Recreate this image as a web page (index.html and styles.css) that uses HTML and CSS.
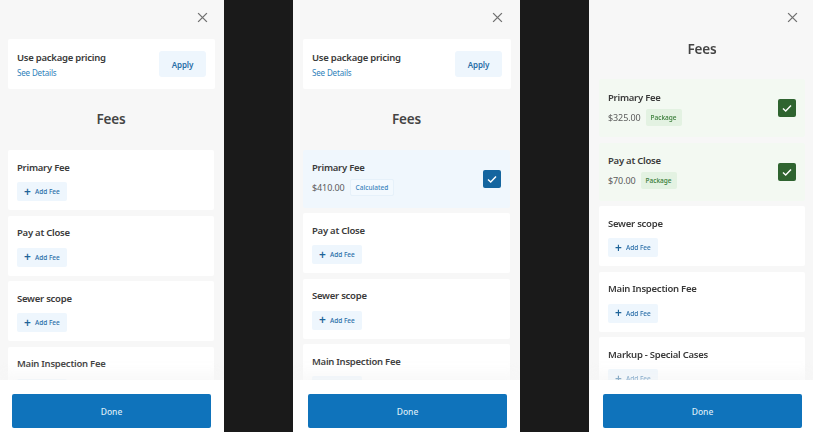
FILE: index.html
```html
<!DOCTYPE html>
<html lang="en">
<head>
    <meta charset="UTF-8">
    <title>Fees</title>
    <link rel="stylesheet" href="styles.css">
</head>
<body>
    <div class="screens">
        <section class="panel panel-one">
            <div class="close-row"><svg class="close" viewBox="0 0 10 10"><path d="M1 1l8 8M9 1l-8 8"/></svg></div>
            <div class="package">
                <div>
                    <div class="fee-name">Use package pricing</div>
                    <a class="details">See Details</a>
                </div>
                <button class="apply">Apply</button>
            </div>
            <h1>Fees</h1>
            <div class="fee-list">
                <div class="fee"><div class="fee-name">Primary Fee</div><button class="add"><span class="plus">+</span>Add Fee</button></div>
                <div class="fee"><div class="fee-name">Pay at Close</div><button class="add"><span class="plus">+</span>Add Fee</button></div>
                <div class="fee"><div class="fee-name">Sewer scope</div><button class="add"><span class="plus">+</span>Add Fee</button></div>
                <div class="fee"><div class="fee-name">Main Inspection Fee</div><button class="add"><span class="plus">+</span>Add Fee</button></div>
            </div>
            <div class="footer"><button class="done">Done</button></div>
        </section>

        <section class="panel panel-two">
            <div class="close-row"><svg class="close" viewBox="0 0 10 10"><path d="M1 1l8 8M9 1l-8 8"/></svg></div>
            <div class="package">
                <div>
                    <div class="fee-name">Use package pricing</div>
                    <a class="details">See Details</a>
                </div>
                <button class="apply">Apply</button>
            </div>
            <h1>Fees</h1>
            <div class="fee-list">
                <div class="fee fee-blue">
                    <div>
                        <div class="fee-name">Primary Fee</div>
                        <div class="price-row"><span class="price">$410.00</span><span class="tag tag-blue">Calculated</span></div>
                    </div>
                    <span class="check check-blue"><svg viewBox="0 0 12 12"><path d="M2 6.4l2.7 2.6L10 3.4"/></svg></span>
                </div>
                <div class="fee"><div class="fee-name">Pay at Close</div><button class="add"><span class="plus">+</span>Add Fee</button></div>
                <div class="fee"><div class="fee-name">Sewer scope</div><button class="add"><span class="plus">+</span>Add Fee</button></div>
                <div class="fee"><div class="fee-name">Main Inspection Fee</div><button class="add"><span class="plus">+</span>Add Fee</button></div>
            </div>
            <div class="footer"><button class="done">Done</button></div>
        </section>

        <section class="panel panel-three">
            <div class="close-row"><svg class="close" viewBox="0 0 10 10"><path d="M1 1l8 8M9 1l-8 8"/></svg></div>
            <h1 class="top-title">Fees</h1>
            <div class="fee-list">
                <div class="fee fee-green">
                    <div>
                        <div class="fee-name">Primary Fee</div>
                        <div class="price-row"><span class="price">$325.00</span><span class="tag tag-green">Package</span></div>
                    </div>
                    <span class="check check-green"><svg viewBox="0 0 12 12"><path d="M2 6.4l2.7 2.6L10 3.4"/></svg></span>
                </div>
                <div class="fee fee-green">
                    <div>
                        <div class="fee-name">Pay at Close</div>
                        <div class="price-row"><span class="price">$70.00</span><span class="tag tag-green">Package</span></div>
                    </div>
                    <span class="check check-green"><svg viewBox="0 0 12 12"><path d="M2 6.4l2.7 2.6L10 3.4"/></svg></span>
                </div>
                <div class="fee"><div class="fee-name">Sewer scope</div><button class="add"><span class="plus">+</span>Add Fee</button></div>
                <div class="fee"><div class="fee-name">Main Inspection Fee</div><button class="add"><span class="plus">+</span>Add Fee</button></div>
                <div class="fee"><div class="fee-name">Markup - Special Cases</div><button class="add"><span class="plus">+</span>Add Fee</button></div>
            </div>
            <div class="footer"><button class="done">Done</button></div>
        </section>
    </div>
</body>
</html>
```

FILE: styles.css
```css
html, body {
    margin: 0;
    padding: 0;
    height: 432px;
    overflow: hidden;
    background-color: #1a1a1a;
}
body {
    font-family: "Noto Sans", Arial, sans-serif;
    color: #3c3c3c;
}
.screens {
    display: flex;
    justify-content: space-between;
    height: 432px;
    filter: blur(0.6px);
}
.panel {
    position: relative;
    width: 224px;
    height: 432px;
    overflow: hidden;
    background-color: #f7f7f7;
    padding: 0 10px 0 8px;
    box-sizing: border-box;
    flex-shrink: 0;
}
.panel-two {
    width: 227px;
    padding: 0 10px;
}
.panel-three {
    padding: 0 8px 0 10px;
}
.close-row {
    display: flex;
    justify-content: flex-end;
    height: 39px;
    padding: 12px 6px 0 0;
    box-sizing: border-box;
}
.panel-two .close-row {
    padding-right: 7px;
}
.panel-three .close-row {
    padding-right: 7px;
}
.close {
    width: 11px;
    height: 11px;
    fill: none;
    stroke: #707070;
    stroke-width: 1.2;
}
.package {
    display: flex;
    justify-content: space-between;
    align-items: center;
    height: 50px;
    margin-right: -1px;
    padding: 0 9px;
    box-sizing: border-box;
    background-color: #fff;
    border-radius: 2px;
}
.fee-name {
    font-size: 9.5px;
    font-weight: 600;
    letter-spacing: -0.25px;
    line-height: 13px;
    color: #3a3a3a;
}
.details {
    display: block;
    margin-top: 3px;
    font-size: 8px;
    letter-spacing: -0.15px;
    line-height: 11px;
    color: #2f7fba;
}
.apply {
    width: 47px;
    height: 26px;
    border: none;
    border-radius: 3px;
    background-color: #eef6fd;
    color: #2a6ea8;
    font-family: inherit;
    font-size: 8px;
    font-weight: 600;
    letter-spacing: -0.1px;
    padding: 0;
}
h1 {
    margin: 0;
    height: 61px;
    line-height: 60px;
    text-align: center;
    font-size: 13.5px;
    font-weight: 600;
    letter-spacing: -0.2px;
    color: #444;
}
.top-title {
    height: 40px;
    line-height: 20px;
}
.fee-list {
    display: flex;
    flex-direction: column;
    gap: 5.5px;
}
.fee {
    height: 60px;
    padding: 10.5px 9px 0;
    box-sizing: border-box;
    background-color: #fff;
    border-radius: 2px;
    flex-shrink: 0;
}
.fee-blue,
.fee-green {
    height: 57.5px;
    display: flex;
    justify-content: space-between;
    align-items: center;
    padding: 0 9px;
}
.fee-blue {
    background-color: #f0f7fd;
}
.fee-green {
    height: 58px;
    background-color: #f3f9f2;
}
.add {
    display: flex;
    align-items: center;
    width: 50px;
    height: 19px;
    margin-top: 8.5px;
    padding: 0 0 0 7px;
    border: none;
    border-radius: 2px;
    background-color: #eef6fd;
    color: #2a6ea8;
    font-family: inherit;
    font-size: 6.5px;
    font-weight: 500;
}
.plus {
    font-size: 12px;
    font-weight: 600;
    margin-right: 4px;
    line-height: 10px;
    color: #1f6499;
}
.price-row {
    display: flex;
    align-items: center;
    gap: 5px;
    margin-top: 5px;
}
.price {
    font-size: 9px;
    letter-spacing: -0.1px;
    color: #5c5c5c;
}
.tag {
    font-size: 6.5px;
    font-weight: 500;
    line-height: 17px;
    height: 17px;
    padding: 0 5px;
    border-radius: 2px;
}
.tag-blue {
    color: #3b84bd;
    background-color: #f3f9fe;
    border: 1px solid #e6f1fa;
    height: 15px;
    line-height: 15px;
}
.tag-green {
    color: #357a35;
    background-color: #e3f2e2;
}
.check {
    width: 18px;
    height: 18px;
    border-radius: 2px;
    display: flex;
    align-items: center;
    justify-content: center;
}
.check svg {
    width: 12px;
    height: 12px;
    fill: none;
    stroke: #fff;
    stroke-width: 1.4;
}
.check-blue {
    background-color: #14659f;
}
.check-green {
    background-color: #2f6430;
}
.footer {
    position: absolute;
    left: 0;
    right: 0;
    bottom: 0;
    height: 52px;
    padding: 14px 0 0 12px;
    box-sizing: border-box;
    background-color: #fff;
    display: flex;
    align-items: flex-start;
    box-shadow: 0 -8px 12px rgba(245, 245, 245, 0.6);
}
.panel-two .footer {
    padding-left: 15px;
}
.panel-three .footer {
    padding-left: 14px;
}
.done {
    width: 199px;
    height: 34px;
    border: none;
    border-radius: 2px;
    background-color: #0f73bb;
    color: #dcecf7;
    font-family: inherit;
    font-size: 8.5px;
    font-weight: 500;
    padding: 0;
}
```
